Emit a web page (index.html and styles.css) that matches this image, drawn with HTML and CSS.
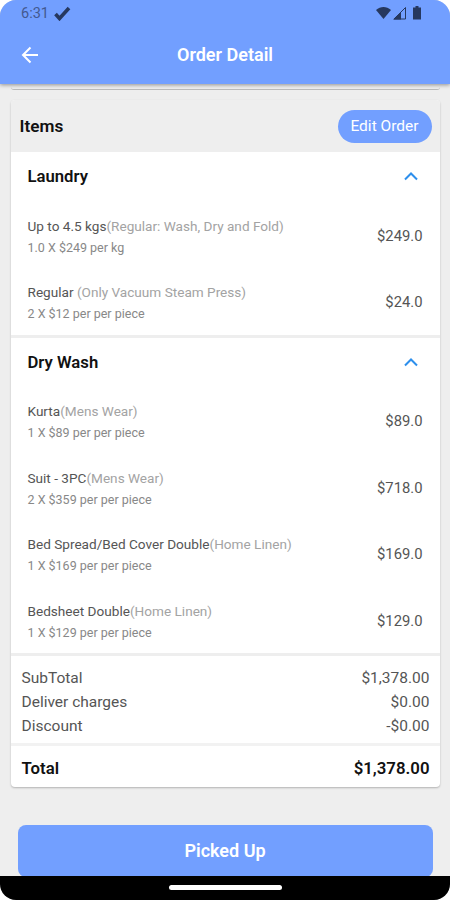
FILE: index.html
```html
<!DOCTYPE html>
<html lang="en">
<head>
    <meta charset="UTF-8">
    <meta name="viewport" content="width=device-width, initial-scale=1.0">
    <title>Order Detail</title>
    <link rel="stylesheet" href="styles.css">
</head>
<body>
    <div class="phone">
        <header class="app-header">
            <div class="status-bar">
                <span class="time">6:31</span>
                <svg class="check" width="17" height="15" viewBox="0 0 17 15"><path d="M1.5 8l4 4.5L15 2" fill="none" stroke="#26385f" stroke-width="3.6"/></svg>
                <div class="status-icons">
                    <svg width="48" height="15" viewBox="0 0 48 15" fill="#26385f">
                        <path d="M0 4C4.5 0 10.500 0 15 4L7.500 13z"/>
                        <path d="M29.500 1.500V13H18z" fill="none" stroke="#26385f" stroke-width="1"/>
                        <path d="M25 6v7.500h-8z"/>
                        <path d="M39.500 0h3v1.500H45V13.500h-8V1.500h2.500z"/>
                    </svg>
                </div>
            </div>
            <div class="title-bar">
                <svg class="back" width="18" height="18" viewBox="0 0 18 18"><path d="M17 9H2M9.500 1.500L2 9L9.500 16.500" fill="none" stroke="#fff" stroke-width="2"/></svg>
                <h1>Order Detail</h1>
            </div>
        </header>

        <main class="content">
            <div class="previous-card"></div>
            <div class="card">
                <div class="card-header">
                    <h2>Items</h2>
                    <button class="edit-btn">Edit Order</button>
                </div>

                <section class="category">
                    <div class="category-header">
                        <h3>Laundry</h3>
                        <svg class="chevron" width="14" height="9" viewBox="0 0 14 9"><path d="M1 7.500L7 1.500L13 7.500"/></svg>
                    </div>
                    <div class="item">
                        <div>
                            <p class="name">Up to 4.5 kgs<span>(Regular: Wash, Dry and Fold)</span></p>
                            <p class="qty">1.0 X $249 per kg</p>
                        </div>
                        <div class="price">$249.0</div>
                    </div>
                    <div class="item">
                        <div>
                            <p class="name">Regular <span>(Only Vacuum Steam Press)</span></p>
                            <p class="qty">2 X $12 per per piece</p>
                        </div>
                        <div class="price">$24.0</div>
                    </div>
                </section>

                <section class="category">
                    <div class="category-header">
                        <h3>Dry Wash</h3>
                        <svg class="chevron" width="14" height="9" viewBox="0 0 14 9"><path d="M1 7.500L7 1.500L13 7.500"/></svg>
                    </div>
                    <div class="item">
                        <div>
                            <p class="name">Kurta<span>(Mens Wear)</span></p>
                            <p class="qty">1 X $89 per per piece</p>
                        </div>
                        <div class="price">$89.0</div>
                    </div>
                    <div class="item">
                        <div>
                            <p class="name">Suit - 3PC<span>(Mens Wear)</span></p>
                            <p class="qty">2 X $359 per per piece</p>
                        </div>
                        <div class="price">$718.0</div>
                    </div>
                    <div class="item">
                        <div>
                            <p class="name">Bed Spread/Bed Cover Double<span>(Home Linen)</span></p>
                            <p class="qty">1 X $169 per per piece</p>
                        </div>
                        <div class="price">$169.0</div>
                    </div>
                    <div class="item">
                        <div>
                            <p class="name">Bedsheet Double<span>(Home Linen)</span></p>
                            <p class="qty">1 X $129 per per piece</p>
                        </div>
                        <div class="price">$129.0</div>
                    </div>
                </section>

                <div class="summary">
                    <div class="summary-row"><span>SubTotal</span><span>$1,378.00</span></div>
                    <div class="summary-row"><span>Deliver charges</span><span>$0.00</span></div>
                    <div class="summary-row"><span>Discount</span><span>-$0.00</span></div>
                </div>
                <div class="total"><span>Total</span><span>$1,378.00</span></div>
            </div>

            <button class="picked-btn">Picked Up</button>
        </main>

        <div class="nav-bar"><div class="handle"></div></div>
    </div>
</body>
</html>
```
FILE: styles.css
```css
* {
    box-sizing: border-box;
}

body {
    margin: 0;
    background: #fff;
    font-family: Roboto, "Liberation Sans", sans-serif;
    color: #111;
}

h1, h2, h3, p {
    margin: 0;
}

button {
    border: none;
    padding: 0;
    font-family: inherit;
    color: #fff;
    background: #729fff;
}

.phone {
    display: flex;
    flex-direction: column;
    width: 450px;
    height: 900px;
    border-radius: 16px;
    overflow: hidden;
    background: #eee;
}

.app-header {
    height: 84px;
    flex-shrink: 0;
    background: #729fff;
    box-shadow: 0 1px 4px rgba(0, 0, 0, 0.4);
    z-index: 1;
}

.status-bar {
    display: flex;
    align-items: center;
    height: 27px;
    padding: 0 26px 0 21px;
}

.time {
    font-size: 14.5px;
    color: #43598f;
}

.check {
    margin-left: 5px;
}

.status-icons {
    display: flex;
    margin-left: auto;
}

.title-bar {
    display: grid;
    grid-template-columns: 18px 1fr 18px;
    align-items: center;
    height: 55px;
    padding: 0 21px;
}

h1 {
    font-size: 18px;
    font-weight: 600;
    text-align: center;
    color: #fff;
}

.content {
    flex: 1;
    min-height: 0;
    overflow: hidden;
    padding: 0 10.5px;
}

.previous-card {
    height: 6px;
    border-bottom: 1px solid #bbb;
    border-radius: 0 0 3px 3px;
}

.card {
    margin-top: 10px;
    border-radius: 4px;
    background: #fff;
    overflow: hidden;
    box-shadow: 0 1px 2px rgba(0, 0, 0, 0.25);
}

.card-header {
    display: flex;
    align-items: center;
    justify-content: space-between;
    height: 52.2px;
    padding: 0 8px 0 9px;
    background: #eee;
}

h2, h3 {
    font-size: 16.7px;
    font-weight: 600;
}

h2 {
    font-size: 17.2px;
}

.edit-btn {
    width: 94px;
    height: 33px;
    border-radius: 17px;
    font-size: 15.5px;
}

.category {
    border-bottom: 3px solid #eee;
}

.category-header {
    display: flex;
    align-items: center;
    justify-content: space-between;
    height: 49.3px;
    padding: 0 22px 0 17px;
}

.chevron path {
    fill: none;
    stroke: #2d8fec;
    stroke-width: 2;
}

.item {
    display: flex;
    align-items: center;
    justify-content: space-between;
    height: 66.6px;
    padding: 2px 17px 0 17px;
}

.name {
    margin-top: 2px;
    font-size: 13.6px;
    line-height: 21px;
    color: #555;
}

.name span {
    color: #a3a3a3;
}

.qty {
    font-size: 12.5px;
    line-height: 21px;
    color: #888;
}

.price {
    font-size: 14.8px;
    color: #555;
}

.summary {
    height: 89.4px;
    padding: 10px 10px 0 11px;
    border-bottom: 3px solid #f2f2f2;
    font-size: 15.5px;
    line-height: 24px;
    color: #555;
}

.summary-row {
    display: flex;
    justify-content: space-between;
}

.total {
    display: flex;
    align-items: center;
    justify-content: space-between;
    height: 41px;
    padding: 4px 10px 0 11px;
    font-size: 16.8px;
    font-weight: 600;
}

.picked-btn {
    display: block;
    width: 415px;
    height: 52px;
    margin: 38px auto 0;
    border-radius: 8px;
    font-size: 18px;
    font-weight: 600;
}

.nav-bar {
    display: flex;
    justify-content: center;
    height: 24px;
    flex-shrink: 0;
    padding-top: 9px;
    background: #000;
}

.handle {
    width: 113px;
    height: 5px;
    border-radius: 3px;
    background: #fff;
}
```
